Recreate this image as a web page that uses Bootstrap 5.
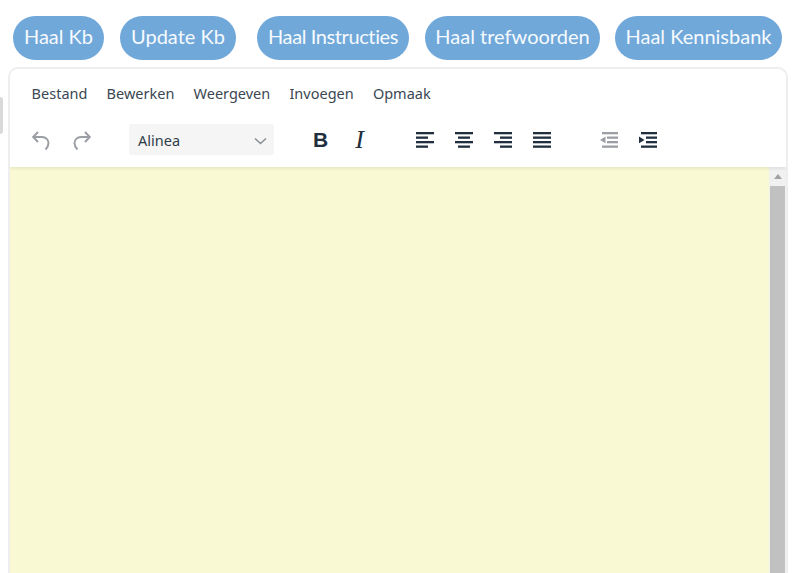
<!DOCTYPE html>
<html lang="nl">
<head>
<meta charset="utf-8">
<title>Editor</title>
<link href="https://cdn.jsdelivr.net/npm/bootstrap@5.3.0/dist/css/bootstrap.min.css" rel="stylesheet">
<style>
html,body{height:573px;overflow:hidden;background:#fff}
body{font-family:"Noto Sans","Open Sans",sans-serif;position:relative}
.page-wrap{padding:16px 0 0 13px}
.pill-row{height:44px;margin-bottom:7px}
.pill-btn{height:44px;border:0;border-radius:22px;background:#70a8da;color:#f6fafd;font-family:Lato,sans-serif;font-size:20px;font-weight:400;font-variant-ligatures:none;line-height:40px;padding:0 0 4px;text-align:center;white-space:nowrap}
.w1{width:91px}.w2{width:116px;margin-left:16px}.w3{width:152px;margin-left:21px;letter-spacing:-.4px}.w4{width:175px;margin-left:16px}.w5{width:167px;margin-left:15px}
.side-tab{position:absolute;left:0;top:97px;width:3px;height:37px;background:#d9d9d9;border-radius:0 3px 3px 0}
.editor-box{margin-left:-5px;width:780px;height:522px;border:2px solid #eeeeee;border-bottom:0;border-radius:10px 10px 0 0;overflow:hidden}
.editor-head{height:98px;padding-left:11px;box-shadow:0 2px 3px rgba(0,0,0,.07);position:relative}
.menu-row{height:42px;padding-top:7px;font-size:14.5px;color:#3a4753;margin-left:1px}
.menu-item{padding:0 9.600px;line-height:34px}
.tool-row{height:57px}
.tool-btn{width:39px;height:34px;color:#222f3e;flex:none}
.tool-next{margin-left:2px}
.tool-off{color:#9b9fa5}
.tool-gap-a{width:26px;flex:none}
.tool-gap-b{width:28px;flex:none}
.format-select{width:145px;height:31px;background:#f5f5f5;border-radius:3px;font-size:14.5px;color:#2f3d4b;padding:2px 7px 0 9px;margin:0 27px 0 28px;flex:none}
.bold-mark{font-family:"Liberation Sans",sans-serif;font-weight:700;font-size:21px;line-height:1}
.ital-mark{font-family:"Liberation Serif",serif;font-style:italic;font-size:26px;line-height:1}
.editor-body{height:424px;background:#f9f9d3}
.edit-area{flex:1 1 auto}
.scroll-rail{width:17px;background:#f1f1f1;flex:none;padding:0 1px}
.scroll-up{height:19px}
.scroll-thumb{height:405px;background:#c1c1c1}
</style>
</head>
<body>
<div class="side-tab"></div>
<div class="page-wrap">
  <div class="pill-row d-flex">
    <button class="pill-btn w1">Haal Kb</button>
    <button class="pill-btn w2">Update Kb</button>
    <button class="pill-btn w3">Haal Instructies</button>
    <button class="pill-btn w4">Haal trefwoorden</button>
    <button class="pill-btn w5">Haal Kennisbank</button>
  </div>
  <div class="editor-box bg-white">
    <div class="editor-head">
      <div class="menu-row d-flex">
        <span class="menu-item">Bestand</span>
        <span class="menu-item">Bewerken</span>
        <span class="menu-item">Weergeven</span>
        <span class="menu-item">Invoegen</span>
        <span class="menu-item">Opmaak</span>
      </div>
      <div class="tool-row d-flex align-items-center">
        <span class="tool-btn tool-off d-flex align-items-center justify-content-center"><svg width="24" height="24" viewBox="0 0 24 24" fill="none" stroke="currentColor" stroke-width="2"><path d="M9 4 4.200 9 9 14M4.500 9H13c4 0 6.500 3 6.500 6 0 3-1.500 5-3 6.500"/></svg></span>
        <span class="tool-btn tool-next tool-off d-flex align-items-center justify-content-center"><svg width="24" height="24" viewBox="0 0 24 24" fill="none" stroke="currentColor" stroke-width="2"><path d="M15 4 19.800 9 15 14M19.500 9H11c-4 0-6.500 3-6.500 6 0 3 1.500 5 3 6.500"/></svg></span>
        <div class="format-select d-flex align-items-center justify-content-between"><span>Alinea</span><svg width="13" height="8" viewBox="0 0 13 8" fill="none" stroke="#8a8f96" stroke-width="1.600"><path d="M1 1.500 6.500 6.500 12 1.500"/></svg></div>
        <span class="tool-btn d-flex align-items-center justify-content-center"><span class="bold-mark">B</span></span>
        <span class="tool-btn d-flex align-items-center justify-content-center"><span class="ital-mark">I</span></span>
        <span class="tool-gap-a"></span>
        <span class="tool-btn d-flex align-items-center justify-content-center"><svg width="18" height="16" viewBox="0 0 18 16" fill="currentColor"><rect width="18" height="2.300" y="0"/><rect width="12" height="2.300" y="4.500"/><rect width="18" height="2.300" y="9"/><rect width="12" height="2.300" y="13.500"/></svg></span>
        <span class="tool-btn d-flex align-items-center justify-content-center"><svg width="18" height="16" viewBox="0 0 18 16" fill="currentColor"><rect width="18" height="2.300" y="0"/><rect x="3" width="12" height="2.300" y="4.500"/><rect width="18" height="2.300" y="9"/><rect x="3" width="12" height="2.300" y="13.500"/></svg></span>
        <span class="tool-btn d-flex align-items-center justify-content-center"><svg width="18" height="16" viewBox="0 0 18 16" fill="currentColor"><rect width="18" height="2.300" y="0"/><rect x="6" width="12" height="2.300" y="4.500"/><rect width="18" height="2.300" y="9"/><rect x="6" width="12" height="2.300" y="13.500"/></svg></span>
        <span class="tool-btn d-flex align-items-center justify-content-center"><svg width="18" height="16" viewBox="0 0 18 16" fill="currentColor"><rect width="18" height="2.300" y="0"/><rect width="18" height="2.300" y="4.500"/><rect width="18" height="2.300" y="9"/><rect width="18" height="2.300" y="13.500"/></svg></span>
        <span class="tool-gap-b"></span>
        <span class="tool-btn tool-off d-flex align-items-center justify-content-center"><svg width="18" height="16" viewBox="0 0 18 16" fill="currentColor"><rect x="2" width="16" height="2.300" y="0"/><rect x="7" width="11" height="2.300" y="4.500"/><rect x="7" width="11" height="2.300" y="9"/><rect x="2" width="16" height="2.300" y="13.500"/><path d="M5.500 4.500 0 7.900 5.500 11.300z"/></svg></span>
        <span class="tool-btn d-flex align-items-center justify-content-center"><svg width="18" height="16" viewBox="0 0 18 16" fill="currentColor"><rect x="2" width="16" height="2.300" y="0"/><rect x="7" width="11" height="2.300" y="4.500"/><rect x="7" width="11" height="2.300" y="9"/><rect x="2" width="16" height="2.300" y="13.500"/><path d="M0 4.500 5.500 7.900 0 11.300z"/></svg></span>
      </div>
    </div>
    <div class="editor-body d-flex">
      <div class="edit-area"></div>
      <div class="scroll-rail">
        <div class="scroll-up d-flex align-items-center justify-content-center"><svg width="8" height="5" viewBox="0 0 8 5" fill="#a3a3a3"><path d="M4 0 8 5H0z"/></svg></div>
        <div class="scroll-thumb"></div>
      </div>
    </div>
  </div>
</div>
</body>
</html>
